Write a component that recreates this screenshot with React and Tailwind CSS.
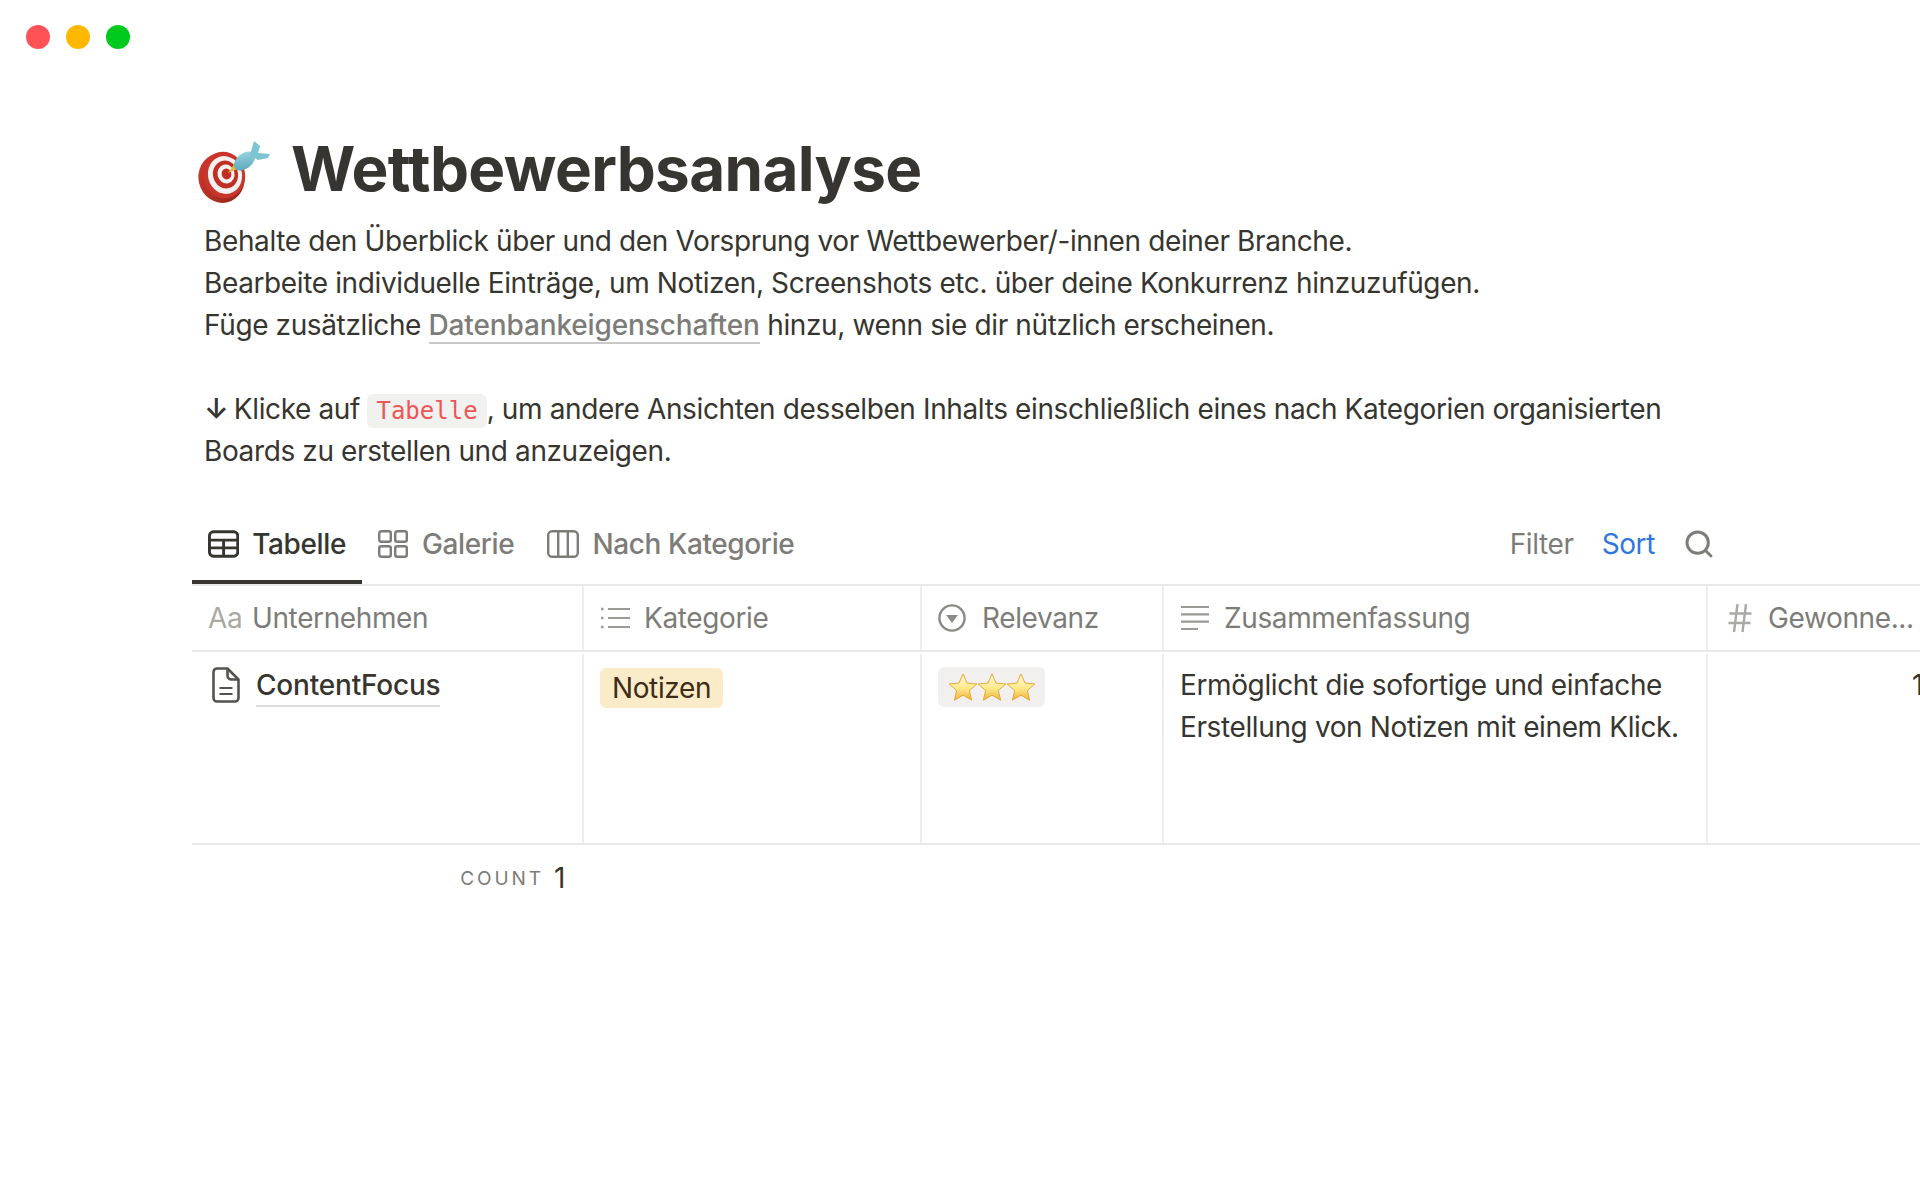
import { Search } from 'lucide-react';

function TableIcon({ className }) {
  return (
    <svg viewBox="0 0 32 28" className={className} fill="none" stroke="currentColor" strokeWidth="3">
      <rect x="1.5" y="1.5" width="29" height="25" rx="4" />
      <path d="M1.5 10h29M1.5 18h29M16 10v16.5" />
    </svg>
  );
}

function GalleryIcon({ className }) {
  return (
    <svg viewBox="0 0 30 28" className={className} fill="none" stroke="currentColor" strokeWidth="2.4">
      <rect x="1.2" y="1.2" width="11.6" height="10.6" rx="2" />
      <rect x="17.2" y="1.2" width="11.6" height="10.6" rx="2" />
      <rect x="1.2" y="16.2" width="11.6" height="10.6" rx="2" />
      <rect x="17.2" y="16.2" width="11.6" height="10.6" rx="2" />
    </svg>
  );
}

function BoardIcon({ className }) {
  return (
    <svg viewBox="0 0 32 28" className={className} fill="none" stroke="currentColor" strokeWidth="2.4">
      <rect x="1.2" y="1.2" width="29.6" height="25.6" rx="4" />
      <path d="M11.2 1.2v25.6M20.8 1.2v25.6" />
    </svg>
  );
}

function ListIcon({ className }) {
  return (
    <svg viewBox="0 0 30 24" className={className} fill="none" stroke="currentColor" strokeWidth="2">
      <path d="M8 3h22M8 12h22M8 21h22" />
      <path d="M1 3h2.5M1 12h2.5M1 21h2.5" strokeWidth="2.6" />
    </svg>
  );
}

function StatusIcon({ className }) {
  return (
    <svg viewBox="0 0 28 28" className={className} fill="none">
      <circle cx="14" cy="14" r="12.6" stroke="currentColor" strokeWidth="2.4" />
      <path d="M8 11h12l-6 8z" fill="currentColor" />
    </svg>
  );
}

function TextIcon({ className }) {
  return (
    <svg viewBox="0 0 30 26" className={className} fill="none" stroke="currentColor" strokeWidth="2.2">
      <path d="M1 2h28M1 9.300h28M1 16.600h28M1 24h17" />
    </svg>
  );
}

function HashIcon({ className }) {
  return (
    <svg viewBox="0 0 24 30" className={className} fill="none" stroke="currentColor" strokeWidth="2.4">
      <path d="M9.500 1L6 29M18 1l-3.500 28M1.500 10.500h22M0.500 20h22" />
    </svg>
  );
}

function PageIcon({ className }) {
  return (
    <svg viewBox="0 0 28 36" className={className} fill="none" stroke="currentColor" strokeWidth="2.6" strokeLinejoin="round">
      <path d="M5 1.500h10.500L26.500 12.500V31a3.500 3.500 0 0 1-3.500 3.500H5A3.500 3.500 0 0 1 1.500 31V5A3.500 3.500 0 0 1 5 1.500z" />
      <path d="M15.500 1.500v7a4 4 0 0 0 4 4h7" />
      <path d="M7.500 21h13M7.500 27h13" strokeWidth="2.200" />
    </svg>
  );
}

function DartTarget({ className }) {
  return (
    <svg viewBox="0 0 72 62" className={className}>
      <defs>
        <linearGradient id="dart" x1="0" y1="1" x2="1" y2="0">
          <stop offset="0" stopColor="#4f9fb4" />
          <stop offset="1" stopColor="#a6dce6" />
        </linearGradient>
        <linearGradient id="disk" x1="0" y1="0" x2="1" y2="1">
          <stop offset="0" stopColor="#cf3b30" />
          <stop offset="1" stopColor="#8f2419" />
        </linearGradient>
      </defs>
      <ellipse cx="23.500" cy="37" rx="23" ry="25" fill="url(#disk)" transform="rotate(-14 23.500 37)" />
      <ellipse cx="26" cy="34" rx="21" ry="23.500" fill="#c9352a" transform="rotate(-14 26 34)" />
      <ellipse cx="27" cy="34" rx="17" ry="19" fill="#f5f1ee" transform="rotate(-14 27 34)" />
      <ellipse cx="27.500" cy="33.500" rx="12.500" ry="14" fill="#bf2f26" transform="rotate(-14 27.500 33.500)" />
      <ellipse cx="28" cy="33" rx="8.500" ry="9.500" fill="#f5f1ee" transform="rotate(-14 28 33)" />
      <ellipse cx="28.500" cy="33" rx="4.800" ry="5.500" fill="#bf2f26" transform="rotate(-14 28.500 33)" />
      <path d="M30 32l7-10 5 5z" fill="#e2b93d" />
      <ellipse cx="46.500" cy="20" rx="12" ry="7.500" fill="url(#dart)" transform="rotate(-38 46.500 20)" />
      <path d="M52 14L56 0l6 5-2 7 12 1-2 4-10 2z" fill="#7cc3d3" />
    </svg>
  );
}

function Star() {
  return (
    <svg viewBox="0 0 24 24" className="w-[30px] h-[30px] -mx-[0.5px]">
      <defs>
        <linearGradient id="star" x1="0" y1="0" x2="0" y2="1">
          <stop offset="0" stopColor="#fffbe0" />
          <stop offset="0.55" stopColor="#fde98a" />
          <stop offset="1" stopColor="#f0b035" />
        </linearGradient>
      </defs>
      <path
        d="M12 1.500l3.200 7.300 7.900.8-6 5.200 1.800 7.800-6.900-4.100-6.900 4.100 1.800-7.800-6-5.200 7.900-.8z"
        fill="url(#star)"
        stroke="#e5a93a"
        strokeWidth="0.8"
        strokeLinejoin="round"
      />
    </svg>
  );
}

function Tab({ icon: Icon, label, active, iconClass }) {
  return (
    <div className={`flex items-center h-full whitespace-nowrap font-medium pb-[2px] ${active ? 'text-[#37352f]' : 'text-[#7d7c78]'}`}>
      <Icon className={iconClass} />
      <span>{label}</span>
    </div>
  );
}

function HeadCell({ width, icon, label, border = true }) {
  return (
    <div className={`${width} shrink-0 h-full flex items-center pl-4 text-[#7d7c78] whitespace-nowrap ${border ? 'border-r-2 border-[#ededec]' : ''}`}>
      {icon}
      <span>{label}</span>
    </div>
  );
}

export default function App() {
  return (
    <div className="h-[1200px] w-full bg-white overflow-hidden text-[#37352f] text-[28px] tracking-[-0.38px] font-['Inter',sans-serif]">
      {/* window buttons */}
      <div className="flex gap-4 pl-[26px] pt-[25px]">
        <div className="w-6 h-6 rounded-full bg-[#ff5257]" />
        <div className="w-6 h-6 rounded-full bg-[#ffb800]" />
        <div className="w-6 h-6 rounded-full bg-[#00ca1e]" />
      </div>

      <div className="pl-[192px] mt-[84px]">
        <div className="flex items-center h-[72px]">
          <DartTarget className="w-[72px] h-[62px] ml-[6px] mt-[6px]" />
          <h1 className="ml-[21px] text-[62px] leading-[72px] font-bold tracking-[-0.67px] text-[#37352f]">Wettbewerbsanalyse</h1>
        </div>

        <div className="pl-3 mt-[15px] leading-[42px] w-[1500px]">
          <p>Behalte den Überblick über und den Vorsprung vor Wettbewerber/-innen deiner Branche.</p>
          <p>Bearbeite individuelle Einträge, um Notizen, Screenshots etc. über deine Konkurrenz hinzuzufügen.</p>
          <p>
            Füge zusätzliche{' '}
            <span className="text-[#7d7c78] font-medium tracking-[-0.14px] border-b-2 border-[#c9c9c7]">Datenbankeigenschaften</span>{' '}
            hinzu, wenn sie dir nützlich erscheinen.
          </p>
          <p className="h-[42px]" />
          <p className="h-[42px]">
            <span className="font-semibold -mr-[2px]">↓</span> Klicke auf{' '}
            <code className="font-['DejaVu_Sans_Mono',monospace] text-[24px] tracking-normal text-[#eb5757] bg-[#f1f1ef] rounded-md px-[9px] py-[3px]">Tabelle</code>
            , um andere Ansichten desselben Inhalts einschließlich eines nach Kategorien organisierten
          </p>
          <p>Boards zu erstellen und anzuzeigen.</p>
        </div>

        {/* view tabs */}
        <div className="mt-[33px] h-[79px] flex items-center w-[1523px]">
          <div className="relative h-full pl-4 pr-4 w-[170px] shrink-0">
            <Tab icon={TableIcon} label="Tabelle" active iconClass="w-8 h-7 mr-[13px]" />
            <div className="absolute left-0 bottom-0 w-full h-1 bg-[#37352f]" />
          </div>
          <div className="ml-4 h-full">
            <Tab icon={GalleryIcon} label="Galerie" iconClass="w-[30px] h-7 mr-[14px]" />
          </div>
          <div className="ml-[33px] h-full">
            <Tab icon={BoardIcon} label="Nach Kategorie" iconClass="w-8 h-7 mr-[13px]" />
          </div>
          <div className="ml-auto flex items-center text-[#7d7c78] pb-[2px]">
            <span>Filter</span>
            <span className="ml-7 text-[#2f77dc]">Sort</span>
            <Search className="ml-[28px] w-8 h-8" strokeWidth={2.2} />
          </div>
        </div>

        {/* table */}
        <div className="border-t-2 border-[#e9e9e7]">
          <div className="flex h-[66px] border-b-2 border-[#e9e9e7]">
            <HeadCell
              width="w-[392px]"
              icon={<span className="text-[#a9a9a6] mr-[10px] w-[34px]">Aa</span>}
              label="Unternehmen"
            />
            <HeadCell width="w-[338px]" icon={<ListIcon className="w-[30px] h-6 mr-[14px] text-[#9b9a97]" />} label="Kategorie" />
            <HeadCell width="w-[242px]" icon={<StatusIcon className="w-7 h-7 mr-[16px] text-[#8b8a87]" />} label="Relevanz" />
            <HeadCell width="w-[544px]" icon={<TextIcon className="w-[30px] h-[26px] mr-[14px] text-[#9b9a97]" />} label="Zusammenfassung" />
            <HeadCell
              width="w-[260px]"
              border={false}
              icon={<HashIcon className="w-[24px] h-[30px] mr-[16px] ml-[4px] text-[#a9a9a6]" />}
              label="Gewonne..."
            />
          </div>

          <div className="flex h-[193px] border-b-2 border-[#e9e9e7] pt-[2px]">
            <div className="w-[392px] shrink-0 border-r-2 border-[#ededec] pl-5 pt-[11px] flex items-start">
              <PageIcon className="w-7 h-9 mt-[2px] mr-[16px] text-[#55534e]" />
              <span className="font-medium tracking-[-0.2px] leading-[40px] border-b-2 border-[#dededc]">ContentFocus</span>
            </div>
            <div className="w-[338px] shrink-0 border-r-2 border-[#ededec] pl-4 pt-[13px]">
              <span className="inline-block h-10 leading-10 px-3 rounded-md bg-[#faecc9] text-[#3f2c18]">Notizen</span>
            </div>
            <div className="w-[242px] shrink-0 border-r-2 border-[#ededec] pl-4 pt-[13px]">
              <span className="inline-flex items-center h-10 px-[10px] rounded-md bg-[#f1f0ef]">
                <Star />
                <Star />
                <Star />
              </span>
            </div>
            <div className="w-[544px] shrink-0 border-r-2 border-[#ededec] pl-4 pt-[10px] leading-[42px]">
              <p>Ermöglicht die sofortige und einfache</p>
              <p>Erstellung von Notizen mit einem Klick.</p>
            </div>
            <div className="w-[260px] shrink-0 pt-[10px] leading-[42px] pl-[204px]">1</div>
          </div>

          <div className="flex items-center h-[66px] w-[392px] pr-[19px] justify-end">
            <span className="text-[19px] tracking-[2.9px] text-[#7d7c78] mr-[10px] mt-[2px]">COUNT</span>
            <span>1</span>
          </div>
        </div>
      </div>
    </div>
  );
}
